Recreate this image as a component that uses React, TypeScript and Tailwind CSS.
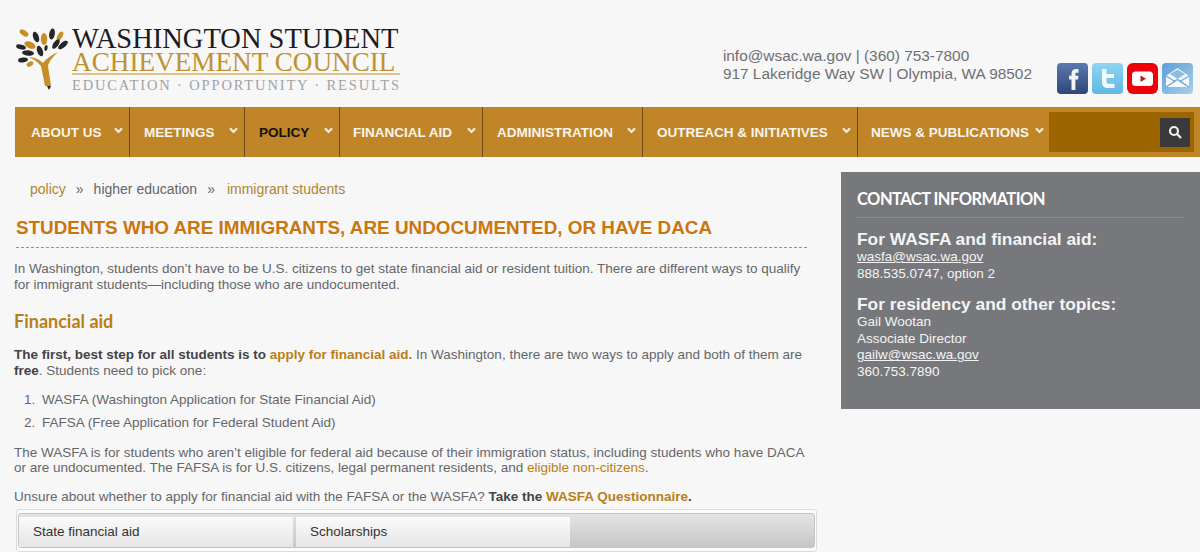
import React from "react";

const navItems = [
  { label: "ABOUT US", width: "w-[114px]", pad: "pl-[15px]" },
  { label: "MEETINGS", width: "w-[115px]", pad: "pl-[14px]" },
  { label: "POLICY", width: "w-[95px]", pad: "pl-[14px]", active: true },
  { label: "FINANCIAL AID", width: "w-[143px]", pad: "pl-[13px]" },
  { label: "ADMINISTRATION", width: "w-[160px]", pad: "pl-[14px]" },
  { label: "OUTREACH & INITIATIVES", width: "w-[215px]", pad: "pl-[14px]" },
  { label: "NEWS & PUBLICATIONS", width: "w-[192px]", pad: "pl-[13px]", last: true },
];

function Chevron() {
  return (
    <svg width="9" height="7" viewBox="0 0 9 7" className="mt-[-3px]">
      <path d="M1 1.2 L4.5 5 L8 1.2" fill="none" stroke="#f4ead8" strokeWidth="2.2" />
    </svg>
  );
}

function TreeLogo() {
  const gold = "#c58f26";
  const dark = "#26262a";
  return (
    <svg width="56" height="66" viewBox="0 0 56 66" className="shrink-0">
      <path d="M29 58 L25 38 C21 33 16 30 12 29 C18 29 23 31 27 35 C30 31 35 27 42 24 C37 29 33 33 32 38 L35 58 Z" fill={gold} />
      <path d="M31 58 L35 58 L33 62 Z" fill={dark} />
      <ellipse cx="8" cy="5" rx="5" ry="2.6" transform="rotate(35 8 5)" fill={gold} />
      <ellipse cx="20" cy="9" rx="2.8" ry="5.5" transform="rotate(-20 20 9)" fill={dark} />
      <ellipse cx="28" cy="11" rx="3.2" ry="6" fill={gold} />
      <ellipse cx="36" cy="6" rx="2.8" ry="5.5" transform="rotate(10 36 6)" fill={dark} />
      <ellipse cx="44" cy="8" rx="2.4" ry="5" transform="rotate(30 44 8)" fill={gold} />
      <ellipse cx="14" cy="17" rx="6" ry="3.2" transform="rotate(25 14 17)" fill={gold} />
      <ellipse cx="5" cy="19" rx="5" ry="2.4" transform="rotate(15 5 19)" fill={dark} />
      <ellipse cx="40" cy="16" rx="2.6" ry="5.5" transform="rotate(35 40 16)" fill={dark} />
      <ellipse cx="47" cy="17" rx="2.6" ry="6" transform="rotate(50 47 17)" fill={dark} />
      <ellipse cx="24" cy="23" rx="2.8" ry="5.5" transform="rotate(-20 24 23)" fill={dark} />
      <ellipse cx="30" cy="20" rx="1.6" ry="3" transform="rotate(10 30 20)" fill={dark} />
      <ellipse cx="12" cy="25" rx="6" ry="2.8" transform="rotate(5 12 25)" fill={dark} />
      <ellipse cx="7" cy="32" rx="5" ry="2.4" transform="rotate(-8 7 32)" fill={dark} />
      <ellipse cx="14" cy="36" rx="3.6" ry="2.2" transform="rotate(-30 14 36)" fill={gold} />
    </svg>
  );
}

function Logo() {
  return (
    <div className="flex items-start pl-[16px] pt-[28px]">
      <TreeLogo />
      <div className="mt-[-1px] w-[328px] font-['Liberation_Serif',serif]">
        <div className="text-[28.5px] leading-[24px] whitespace-nowrap text-[#1c1c1e]">WASHINGTON STUDENT</div>
        <div className="text-[27.2px] leading-[22px] whitespace-nowrap text-[#c0922e]">ACHIEVEMENT COUNCIL</div>
        <div className="h-[2px] bg-[#dcc48c]" />
        <div className="mt-[2px] text-[14.5px] leading-[16px] whitespace-nowrap text-[#a2a2a4] tracking-[1.85px]">EDUCATION · OPPORTUNITY · RESULTS</div>
      </div>
    </div>
  );
}

function SocialIcons() {
  return (
    <div className="flex gap-[4px]">
      <svg width="31" height="31" viewBox="0 0 31 31">
        <defs>
          <linearGradient id="fb" x1="0" y1="0" x2="0" y2="1">
            <stop offset="0" stopColor="#5a78b0" />
            <stop offset="1" stopColor="#2f4778" />
          </linearGradient>
        </defs>
        <rect width="31" height="31" rx="4" fill="url(#fb)" />
        <path d="M14.5 27 V16.5 H12 V12.8 H14.5 V10.5 C14.5 7.5 16.2 6 19 6 H21.5 V9.8 H19.8 C18.8 9.8 18.4 10.2 18.4 11.2 V12.8 H21.4 L21 16.5 H18.4 V27 Z" fill="#f3f3f5" />
      </svg>
      <svg width="31" height="31" viewBox="0 0 31 31">
        <defs>
          <linearGradient id="tw" x1="0" y1="0" x2="0" y2="1">
            <stop offset="0" stopColor="#90d4f2" />
            <stop offset="1" stopColor="#5fb7e4" />
          </linearGradient>
        </defs>
        <rect width="31" height="31" rx="4" fill="url(#tw)" />
        <path d="M10 6 H14.5 V11 H22 V15 H14.5 V18 C14.5 20 15.5 20.8 17.5 20.8 H22.5 V25 H16 C12 25 10 23 10 19.5 Z" fill="#eef8fd" />
      </svg>
      <svg width="31" height="31" viewBox="0 0 31 31">
        <rect width="31" height="31" rx="6" fill="#ec0208" />
        <rect x="5" y="8.5" width="21" height="14.5" rx="3.5" fill="#ffffff" />
        <path d="M13.5 12.5 L19 15.7 L13.5 19 Z" fill="#c8141c" />
      </svg>
      <svg width="31" height="31" viewBox="0 0 31 31">
        <defs>
          <linearGradient id="ml" x1="0" y1="0" x2="1" y2="1">
            <stop offset="0" stopColor="#5d9ed8" />
            <stop offset="1" stopColor="#a9d0ec" />
          </linearGradient>
        </defs>
        <rect width="31" height="31" rx="4" fill="url(#ml)" />
        <path d="M4 13 L15.5 5 L27 13 V24 H4 Z" fill="#f2f8fc" />
        <path d="M8 11 L15.5 6.5 L23 11 L15.5 16 Z" fill="#8fbde2" />
        <path d="M4 13 L13 18.5 L4 24 M27 13 L18 18.5 L27 24 M4 24 L15.5 16.5 L27 24" fill="none" stroke="#6ea7d8" strokeWidth="1.1" />
      </svg>
    </div>
  );
}

function NavBar() {
  return (
    <nav className="ml-[15px] flex h-[50px] items-stretch bg-[#c08526] pl-[1px]">
      {navItems.map((item) => (
        <div
          key={item.label}
          className={`${item.width} ${item.pad} flex shrink-0 items-center justify-between pr-[6px] ${item.last ? "" : "border-r border-[#6f4a10]"}`}
        >
          <span className={`pt-[3px] text-[13.5px] font-bold whitespace-nowrap ${item.active ? "text-[#111111]" : "text-[#f8f4ec]"}`}>
            {item.label}
          </span>
          <Chevron />
        </div>
      ))}
      <div className="ml-[-1px] my-[5px] flex w-[145px] items-center justify-end bg-[#9c6500] pr-[4px]">
        <div className="flex h-[29px] w-[30px] items-center justify-center bg-[#3a3a3c]">
          <svg width="14" height="14" viewBox="0 0 14 14">
            <circle cx="6" cy="6" r="4" fill="none" stroke="#f0f0f0" strokeWidth="2.2" />
            <path d="M9 9 L13 13" stroke="#f0f0f0" strokeWidth="2.4" />
          </svg>
        </div>
      </div>
    </nav>
  );
}

function Content() {
  return (
    <div className="w-[826px] shrink-0 text-[13.5px] leading-[15.5px] text-[#666668]">
      <div className="pl-[30px] pt-[24px] text-[14px] leading-[16px]">
        <span className="text-[#b0852f]">policy</span>
        <span className="mx-[10px]">»</span>
        <span>higher education</span>
        <span className="ml-[10px] mr-[12px]">»</span>
        <span className="text-[#b0852f]">immigrant students</span>
      </div>
      <h1 className="ml-[16px] mt-[19px] w-[791px] border-b border-dashed border-[#8a94a0] pb-[7px] text-[18.87px] leading-[24px] font-bold text-[#c9760c]">
        STUDENTS WHO ARE IMMIGRANTS, ARE UNDOCUMENTED, OR HAVE DACA
      </h1>
      <div className="pl-[14px]">
        <p className="mt-[13px]">
          In Washington, students don’t have to be U.S. citizens to get state financial aid or resident tuition. There are different ways to qualify<br />
          for immigrant students—including those who are undocumented.
        </p>
        <h2 className="mt-[17px] font-['Lato',sans-serif] text-[18px] leading-[24px] font-bold text-[#b97f17]">Financial aid</h2>
        <p className="mt-[14px]">
          <strong className="text-[#444446]">The first, best step for all students is to </strong>
          <strong className="text-[#b97f17]">apply for financial aid.</strong> In Washington, there are two ways to apply and both of them are<br />
          <strong className="text-[#444446]">free</strong>. Students need to pick one:
        </p>
        <ol className="mt-[14px] pl-[10px]">
          <li className="flex h-[23px]"><span className="w-[18px]">1.</span>WASFA (Washington Application for State Financial Aid)</li>
          <li className="flex"><span className="w-[18px]">2.</span>FAFSA (Free Application for Federal Student Aid)</li>
        </ol>
        <p className="mt-[14px]">
          The WASFA is for students who aren’t eligible for federal aid because of their immigration status, including students who have DACA<br />
          or are undocumented. The FAFSA is for U.S. citizens, legal permanent residents, and <span className="text-[#b97f17]">eligible non-citizens</span>.
        </p>
        <p className="mt-[13px]">
          Unsure about whether to apply for financial aid with the FAFSA or the WASFA? <strong className="text-[#444446]">Take the </strong>
          <strong className="text-[#b97f17]">WASFA Questionnaire</strong><strong className="text-[#444446]">.</strong>
        </p>
      </div>
      <div className="ml-[16px] mt-[5px] h-[43px] w-[801px] rounded-[3px] border border-[#dcdcdc] bg-[#fbfbfb] px-[1px] py-[3px]">
        <div className="flex h-[35px] rounded-[3px] border border-[#c4c4c4] bg-gradient-to-b from-[#e4e4e4] to-[#c6c6c6] pt-[3px] text-[#333333]">
          <div className="flex h-[30px] w-[274px] items-center bg-gradient-to-b from-[#fafafa] to-[#e6e6e6] pl-[14px]">State financial aid</div>
          <div className="ml-[3px] flex h-[30px] w-[274px] items-center bg-gradient-to-b from-[#fafafa] to-[#e6e6e6] pl-[14px]">Scholarships</div>
        </div>
      </div>
    </div>
  );
}

function Sidebar() {
  return (
    <aside className="mt-[15px] ml-[15px] h-[237px] flex-1 bg-[#77787b] px-[16px] text-[13.5px] leading-[16.6px] text-[#f4f4f4]">
      <h3 className="border-b border-[#8a8b8e] pt-[15px] pb-[6px] font-['Lato',sans-serif] text-[16.5px] leading-[24px] font-bold tracking-[-0.55px] text-white">CONTACT INFORMATION</h3>
      <h4 className="mt-[11px] text-[17.35px] leading-[20px] font-bold">For WASFA and financial aid:</h4>
      <a className="block underline">wasfa@wsac.wa.gov</a>
      <p>888.535.0747, option 2</p>
      <h4 className="mt-[12px] text-[17.35px] leading-[20px] font-bold">For residency and other topics:</h4>
      <p>Gail Wootan</p>
      <p>Associate Director</p>
      <a className="block underline">gailw@wsac.wa.gov</a>
      <p>360.753.7890</p>
    </aside>
  );
}

export default function App() {
  return (
    <div className="h-[552px] w-[1200px] overflow-hidden bg-[#f7f7f8] font-['Liberation_Sans',sans-serif]">
      <header className="flex h-[107px] justify-between">
        <Logo />
        <div className="flex pr-[7px]">
          <div className="mt-[47px] mr-[25px] text-[15.4px] leading-[18px] text-[#6f6f72]">
            <div>info@wsac.wa.gov | (360) 753-7800</div>
            <div>917 Lakeridge Way SW | Olympia, WA 98502</div>
          </div>
          <div className="mt-[63px]"><SocialIcons /></div>
        </div>
      </header>
      <NavBar />
      <main className="flex">
        <Content />
        <Sidebar />
      </main>
    </div>
  );
}
